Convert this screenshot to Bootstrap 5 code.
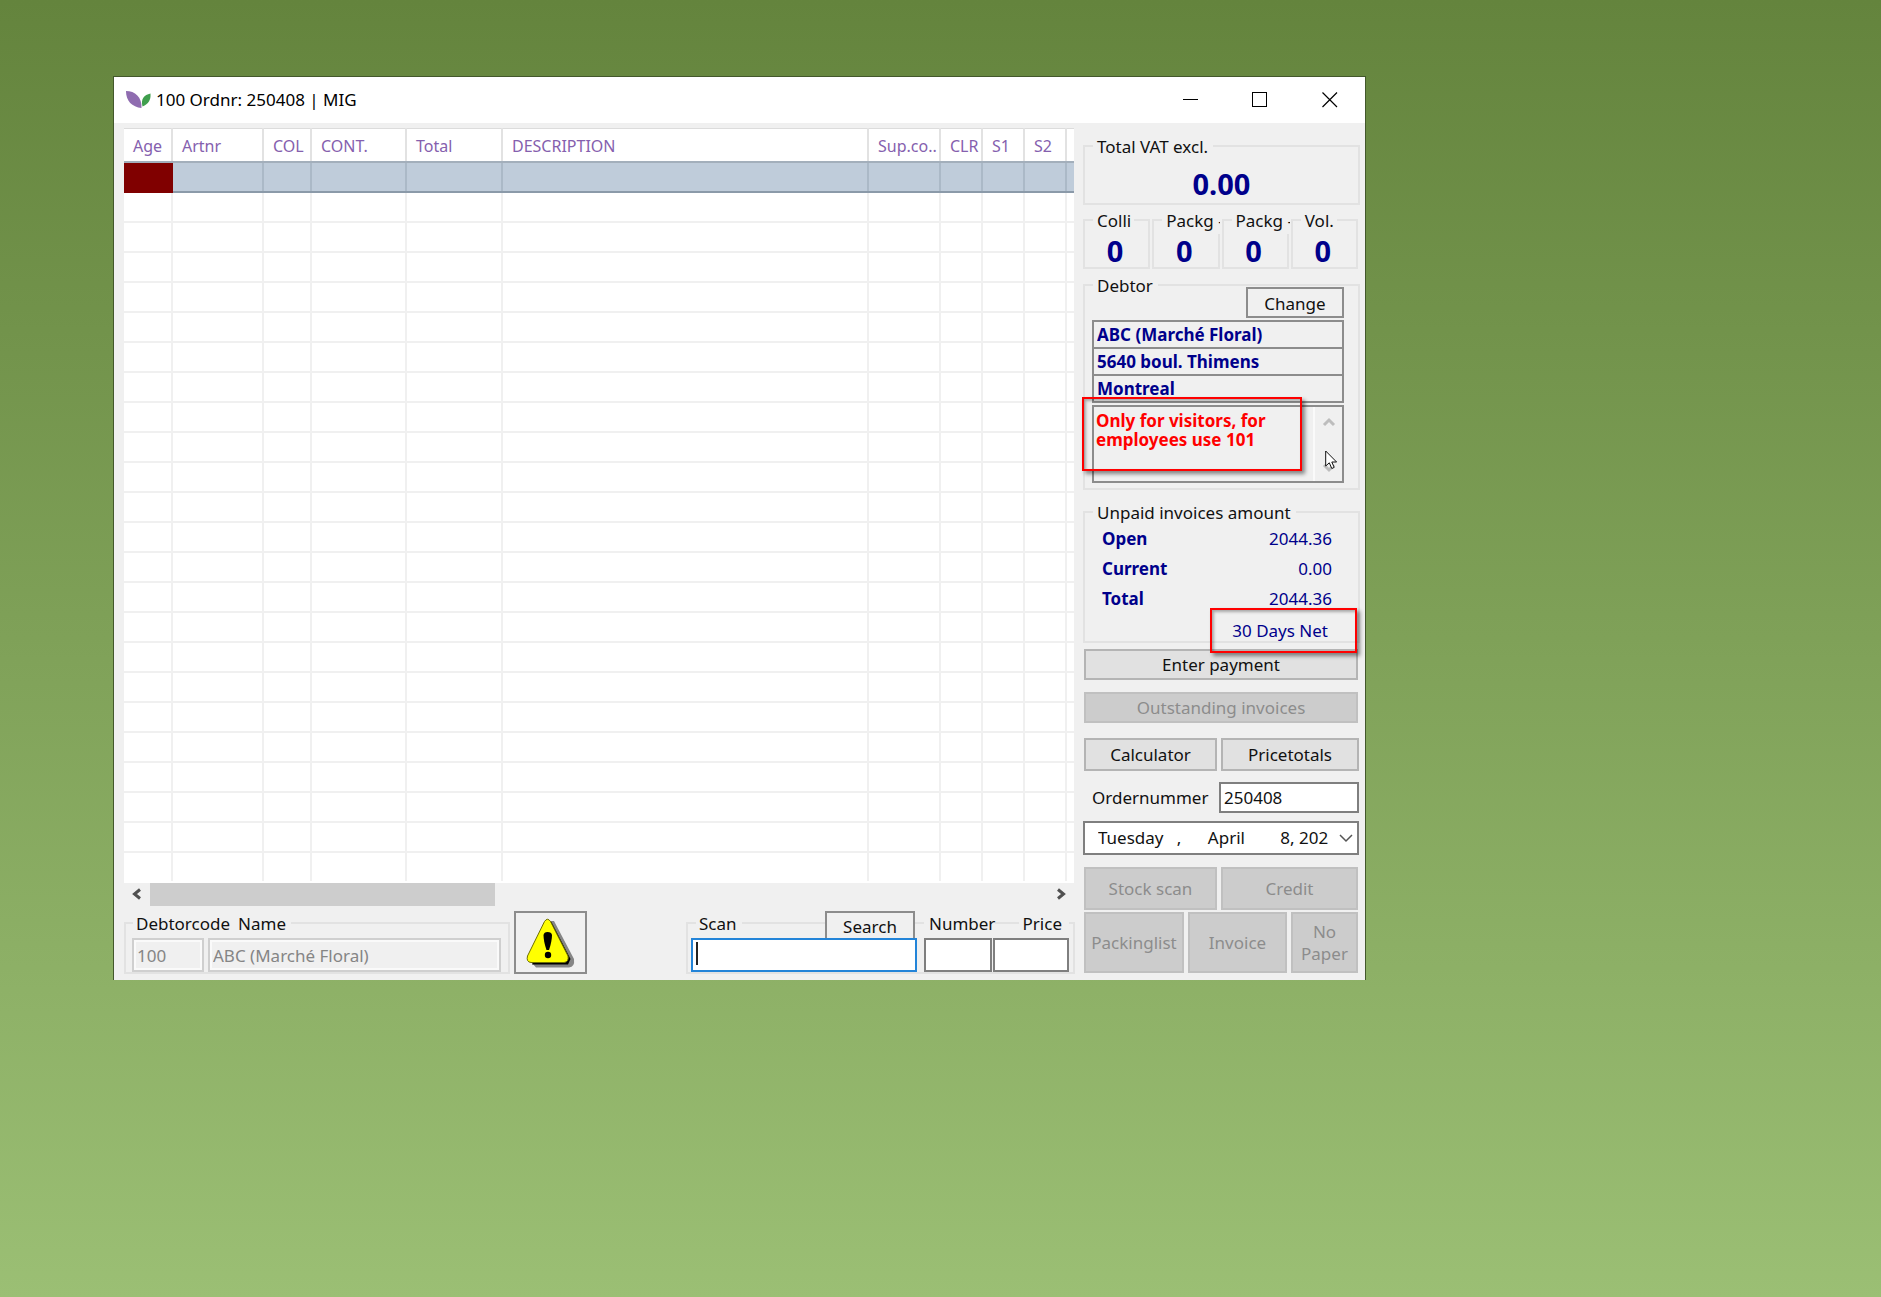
<!DOCTYPE html>
<html lang="en">
<head>
<meta charset="utf-8">
<meta name="viewport" content="width=device-width, initial-scale=1">
<title>100 Ordnr: 250408 | MIG</title>
<link href="https://cdn.jsdelivr.net/npm/bootstrap@5.3.0/dist/css/bootstrap.min.css" rel="stylesheet">
<style>
  :root { --face: #f0f0f0; --navy: #00008b; --edge: #7f7f7f; }
  body { min-height: 100vh; padding: 76px 24px 24px 113px; background: linear-gradient(#64843d, #9bbf74) fixed;
    font-family: "Noto Sans", "Open Sans", sans-serif; font-size: 17px; line-height: 24px; color: #111; }
  input, select, button, textarea { border-radius: 0; font: inherit; }
  .app-window { max-width: 1253px; background: var(--face); border: 1px solid #43582c; border-bottom: 0; }
  .title-bar { height: 46px; padding-left: 12px; color: #000; }
  .win-btn { width: 70px; height: 44px; border: 0; background: none; padding: 0; display: flex; align-items: center; justify-content: center; }
  .main-pane { padding: 5px 0 6px 10px; }
  .side-pane { width: 282px; padding: 11px 5px 7px 0; margin-left: 9px; }

  /* order lines grid */
  .order-grid { table-layout: fixed; width: 100%; background: #fff; border-top: 1px solid #dcdcdc; }
  .order-grid th { height: 33px; padding: 2px 0 0 9px; font-weight: 400; font-size: 16px; line-height: 24px; color: #8560ae;
    border-right: 2px solid #e2e2e2; border-bottom: 2px solid #a3afbb; white-space: nowrap; overflow: hidden; }
  .order-grid td { height: 30px; padding: 0; border-right: 2px solid #f0f0f0; border-bottom: 2px solid #f0f0f0; }
  .order-grid th:last-child, .order-grid td:last-child { border-right: 0; }
  .order-grid tr:last-child td { border-bottom-color: #fff; }
  .order-grid tr.picked td { background: #bfccda; border-right-color: #abb9c7; border-bottom-color: #8b9aa9; }
  .order-grid tr.picked td:first-child { background: #800000; border-color: #800000; }
  .scroll-track { height: 23px; }
  .scroll-track button { width: 26px; border: 0; padding: 0; background: none; display: flex; align-items: center; justify-content: center; }
  .scroll-thumb { width: 345px; background: #cdcdcd; }

  /* group boxes */
  .gbox { position: relative; }
  .gbox::before { content: ""; position: absolute; inset: 11px 0 0 0; border: 2px solid #e2e2e2; pointer-events: none; }
  .gbox > * { position: relative; }
  .gbox .cap { width: auto; display: inline-block; margin: 0 0 0 10px; padding: 0 5px 0 4px; font-size: 17px; line-height: 26px;
    background: var(--face); white-space: nowrap; vertical-align: top; }
  .gbox legend.cap { float: left; }
  .gbox legend + div { clear: both; }
  .big-num { font-size: 29px; line-height: 34px; font-weight: 700; color: var(--navy); text-align: center; }
  .count-box { flex: 1 1 0; min-width: 0; height: 61px; }
  .gbox.count-box .cap { max-width: 58px; padding-right: 3px; overflow: hidden; }
  .flat-btn { background: #e1e1e1; border: 2px solid #b4b4b4; color: #111; padding: 0; line-height: 22px; }
  .flat-btn:disabled { background: #ccc; border-color: #c0c0c0; color: #8c8c8c; }
  .line-btn { background: var(--face); border: 2px solid #8c8c8c; color: #111; padding: 0; }
  .field { border: 2px solid var(--edge); background: #fff; padding: 0 3px; width: 100%; color: #111; }
  .bold-field { background: var(--face); border: 2px solid #8c8c8c; height: 29px; margin-top: -2px; padding: 0 3px; width: 100%;
    font-weight: 700; color: var(--navy); display: block; }
  .note-area { display: flex; border: 2px solid #8c8c8c; height: 78px; margin-top: 2px; }
  .note-area textarea { flex: 1; min-width: 0; border: 0; border-right: 2px solid #fafafa; padding: 4px 2px; background: none; color: #f00; font-weight: 700; line-height: 19px; resize: none; overflow: hidden; }
  .note-area .bar { width: 27px; }
  .gbox > .marker { position: absolute; border: 2px solid #f00; box-shadow: 3px 3px 4px rgba(0,0,0,.45), inset 2px 2px 3px rgba(0,0,0,.3); pointer-events: none; }
  .amounts { color: var(--navy); margin: 0 28px 0 19px; padding-top: 1px; }
  .amounts div { height: 30px; }
  .dis-field { height: 34px; border: 2px solid #cfcfcf; box-shadow: inset 0 0 0 2px #fafafa; background: var(--face); color: #858585; padding: 0 3px; }
  .field.scan-input { border-color: #2384d8; outline: 0; }
  .date-select { appearance: none; height: 34px; padding: 0 0 0 13px; white-space: pre; }

  /* lower bar */
  .lower-bar { height: 63px; gap: 4px; }
  .debtor-code { width: 386px; }
  .codes-head { height: 27px; }
  .debtor-code .codes-head .code-cap { margin-left: 9px; padding-left: 3px; padding-right: 0; }
  .debtor-code .codes-head .name-cap { margin-left: 0; padding-left: 8px; }
  .codes-row { gap: 4px; padding: 0 9px 0 8px; }
  .code-w { width: 72px; }
  .warn-btn { width: 73px; height: 63px; }
  .scan-group { width: 389px; padding: 0 6px 0 5px; margin-right: -1px; }
  .scan-head { height: 27px; }
  .gbox .scan-cap { margin-left: 5px; padding-left: 3px; align-self: flex-start; }
  .gbox .tight { margin-left: 0; padding-left: 5px; padding-right: 0; }
  .scan-group .field { height: 34px; display: block; }
  .scan-col { flex: 1; min-width: 0; }
  .num-col { width: 68px; margin-left: 7px; }
  .price-col { width: 76px; margin-left: 1px; }
  .gbox .price-cap { margin-left: 0; padding-right: 7px; }
  .search-btn { width: 90px; height: 27px; border-bottom: 0; margin-right: 2px; padding-top: 3px; line-height: 22px; }
  .caret { position: absolute; left: 5px; top: 4px; width: 2px; height: 23px; background: #222; }

  /* side column */
  .vat-box { height: 71px; }
  .vat-num { padding-top: 7px; }
  .counts { gap: 2px; margin: 3px 2px 0 0; }
  .count-box .big-num { margin-top: -2px; padding-right: 3px; }
  .debtor-box { height: 217px; margin-top: 4px; }
  .debtor-head { height: 49px; }
  .change-btn { width: 98px; height: 31px; margin: 14px 16px 0 0; padding-top: 3px; line-height: 22px; }
  .debtor-body { padding: 0 16px 0 9px; }
  .note-marker { left: -1px; top: 124px; width: 220px; height: 74px; }
  .gbox > .pointer { position: absolute; left: 242px; top: 177px; }
  .unpaid-box { height: 143px; margin-top: 10px; }
  .terms { padding: 2px 4px 0 0; }
  .terms-marker { left: 127px; top: 108px; width: 147px; height: 45px; }
  .actions { padding: 6px 1px 0; }
  .h31 { height: 31px; } .h33 { height: 33px; } .h43 { height: 43px; }
  .pair { gap: 4px; }
  .half-l { width: 133px; } .w100 { width: 100px; } .w67 { width: 67px; }
  .gap-l { margin-top: 12px; } .gap-xl { margin-top: 15px; }
  .inset-r { margin-right: 1px; }
  .order-row { margin-top: 11px; padding-left: 8px; justify-content: space-between; }
  .ord-input { width: 140px; }
  .date-row { margin: 8px 0 0 -1px; }
  .chev { position: absolute; right: 6px; top: 13px; pointer-events: none; }
  .last-row { margin-top: 2px; height: 61px; }
</style>
</head>
<body>
<main class="app-window">
  <header class="title-bar d-flex align-items-center bg-white">
    <svg width="26" height="20" viewBox="0 0 26 20" aria-hidden="true">
      <path d="M0 1C9 1 16 7 15.500 18C6 17 0 11 0 1Z" fill="#8f6cb0"/>
      <path d="M24.500 3.500C18 5 14.500 9 16.500 16.500C22.500 14 25 10 24.500 3.500Z" fill="#3f9e4d"/>
    </svg>
    <span class="ms-1">100 Ordnr: 250408 | MIG</span>
    <div class="ms-auto d-flex">
      <button class="win-btn" aria-label="Minimize"><svg width="16" height="16"><path d="M1 7.500H16" stroke="#000"/></svg></button>
      <button class="win-btn" aria-label="Maximize"><svg width="16" height="16"><rect x=".5" y=".5" width="14" height="14" fill="none" stroke="#000"/></svg></button>
      <button class="win-btn" aria-label="Close"><svg width="16" height="16"><path d="M.5.5L15 15M15 .5L.5 15" stroke="#000" stroke-width="1.200"/></svg></button>
    </div>
  </header>

  <div class="d-flex">
    <section class="main-pane flex-grow-1 d-flex flex-column">
      <table class="order-grid">
        <colgroup><col style="width:48px"><col style="width:91px"><col style="width:48px"><col style="width:95px"><col style="width:96px"><col><col style="width:72px"><col style="width:42px"><col style="width:42px"><col style="width:42px"><col style="width:8px"></colgroup>
        <thead><tr><th>Age</th><th>Artnr</th><th>COL</th><th>CONT.</th><th>Total</th><th>DESCRIPTION</th><th>Sup.co..</th><th>CLR</th><th>S1</th><th>S2</th><th></th></tr></thead>
        <tbody id="lines"></tbody>
      </table>
      <div class="scroll-track d-flex">
        <button aria-label="Scroll left"><svg width="10" height="12"><path d="M8 1.500L2.500 6L8 10.500" fill="none" stroke="#505050" stroke-width="3"/></svg></button>
        <div class="scroll-thumb"></div>
        <button class="ms-auto" aria-label="Scroll right"><svg width="10" height="12"><path d="M2 1.500L7.500 6L2 10.500" fill="none" stroke="#505050" stroke-width="3"/></svg></button>
      </div>

      <div class="d-flex mt-auto lower-bar">
        <fieldset class="gbox debtor-code">
          <div class="codes-head"><label class="cap code-cap" for="code">Debtorcode</label><label class="cap name-cap" for="dname">Name</label></div>
          <div class="d-flex codes-row">
            <input class="dis-field code-w" id="code" value="100" disabled>
            <input class="dis-field flex-grow-1" id="dname" value="ABC (Marché Floral)" disabled>
          </div>
        </fieldset>
        <button class="line-btn warn-btn" aria-label="Warning">
          <svg width="50" height="50" viewBox="0 0 50 50">
            <path d="M24 3H28L48 41Q49 49 43 49.500H10L7 46L25 7Z" fill="#858585"/>
            <path d="M21 2L25.500 4L44.500 41L42 46.500H6Z" fill="#000"/>
            <path d="M18.500 3.500Q21.500-1 24.500 3.500L42 38Q43 44 38 44.500H5Q0 44 1.500 38Z" fill="#ff0" stroke="#6e6e00"/>
            <path d="M17.500 17Q18 14 21.500 14Q25.500 14 26 17Q26 23 23 32H20.500Q17.500 23 17.500 17Z"/>
            <circle cx="22" cy="37" r="3.200"/>
          </svg>
        </button>
        <fieldset class="gbox scan-group d-flex ms-auto">
          <div class="scan-col">
            <div class="scan-head d-flex"><label class="cap scan-cap" for="scan">Scan</label><button class="line-btn search-btn ms-auto">Search</button></div>
            <div class="position-relative"><input class="field scan-input" id="scan"><span class="caret"></span></div>
          </div>
          <div class="num-col"><div class="scan-head"><label class="cap tight" for="num">Number</label></div><input class="field" id="num"></div>
          <div class="price-col"><div class="scan-head text-end"><label class="cap price-cap" for="price">Price</label></div><input class="field" id="price"></div>
        </fieldset>
      </div>
    </section>

    <aside class="side-pane flex-shrink-0">
      <fieldset class="gbox vat-box"><legend class="cap">Total VAT excl.</legend><div class="big-num vat-num">0.00</div></fieldset>
      <div class="d-flex counts">
        <fieldset class="gbox count-box"><legend class="cap">Colli</legend><div class="big-num">0</div></fieldset>
        <fieldset class="gbox count-box"><legend class="cap">Packg -</legend><div class="big-num">0</div></fieldset>
        <fieldset class="gbox count-box"><legend class="cap">Packg -</legend><div class="big-num">0</div></fieldset>
        <fieldset class="gbox count-box"><legend class="cap">Vol.</legend><div class="big-num">0</div></fieldset>
      </div>

      <fieldset class="gbox debtor-box">
        <div class="debtor-head d-flex align-items-start justify-content-between"><span class="cap">Debtor</span><button class="line-btn change-btn">Change</button></div>
        <div class="debtor-body">
          <input class="bold-field" aria-label="Debtor name" value="ABC (Marché Floral)" readonly>
          <input class="bold-field" aria-label="Street" value="5640 boul. Thimens" readonly>
          <input class="bold-field" aria-label="City" value="Montreal" readonly>
          <div class="note-area">
            <textarea aria-label="Debtor note" readonly>Only for visitors, for
employees use 101</textarea>
            <div class="bar d-flex flex-column justify-content-between align-items-center py-2">
              <svg width="14" height="14"><path d="M2 10L7 5L12 10" fill="none" stroke="#bdbdbd" stroke-width="3"/></svg>
              <svg width="14" height="10"><path d="M2 2L7 7L12 2" fill="none" stroke="#bdbdbd" stroke-width="3"/></svg>
            </div>
          </div>
        </div>
        <div class="marker note-marker"></div>
        <svg class="pointer" width="13" height="20" viewBox="0 0 13 20"><path d="M.7 1V16L4.300 12.800L6.800 18.500L9.200 17.400L6.800 12H11.600Z" fill="#fff" stroke="#111"/></svg>
      </fieldset>

      <fieldset class="gbox unpaid-box">
        <legend class="cap">Unpaid invoices amount</legend>
        <div class="amounts">
          <div class="d-flex justify-content-between"><b>Open</b><span>2044.36</span></div>
          <div class="d-flex justify-content-between"><b>Current</b><span>0.00</span></div>
          <div class="d-flex justify-content-between"><b>Total</b><span>2044.36</span></div>
          <div class="text-end terms">30 Days Net</div>
        </div>
        <div class="marker terms-marker"></div>
      </fieldset>

      <div class="actions d-flex flex-column">
        <button class="flat-btn h31 inset-r">Enter payment</button>
        <button class="flat-btn h31 gap-l inset-r" disabled>Outstanding invoices</button>
        <div class="d-flex pair gap-xl"><button class="flat-btn half-l h33">Calculator</button><button class="flat-btn flex-grow-1 h33">Pricetotals</button></div>
        <div class="d-flex align-items-center order-row"><label for="ordnr">Ordernummer</label><input class="field h31 ord-input" id="ordnr" value="250408"></div>
        <div class="position-relative date-row">
          <select class="field date-select" aria-label="Order date"><option>Tuesday&nbsp;&nbsp;&nbsp;,&nbsp;&nbsp;&nbsp;&nbsp;&nbsp;&nbsp;April&nbsp;&nbsp;&nbsp;&nbsp;&nbsp;&nbsp;&nbsp;&nbsp;8, 202</option></select>
          <svg class="chev" width="14" height="9"><path d="M1 1L7 7L13 1" fill="none" stroke="#555" stroke-width="1.500"/></svg>
        </div>
        <div class="d-flex pair gap-l inset-r"><button class="flat-btn half-l h43" disabled>Stock scan</button><button class="flat-btn flex-grow-1 h43" disabled>Credit</button></div>
        <div class="d-flex pair last-row inset-r"><button class="flat-btn w100" disabled>Packinglist</button><button class="flat-btn flex-grow-1" disabled>Invoice</button><button class="flat-btn w67" disabled>No<br>Paper</button></div>
      </div>
    </aside>
  </div>
</main>
<script src="https://cdn.jsdelivr.net/npm/bootstrap@5.3.0/dist/js/bootstrap.bundle.min.js"></script>
<script>
  // One picked line, then the empty lines of the grid
  const body = document.getElementById('lines');
  for (let i = 0; i < 24; i++) {
    const tr = body.insertRow();
    if (i === 0) tr.className = 'picked';
    for (let c = 0; c < 11; c++) tr.insertCell();
  }
</script>
</body>
</html>
